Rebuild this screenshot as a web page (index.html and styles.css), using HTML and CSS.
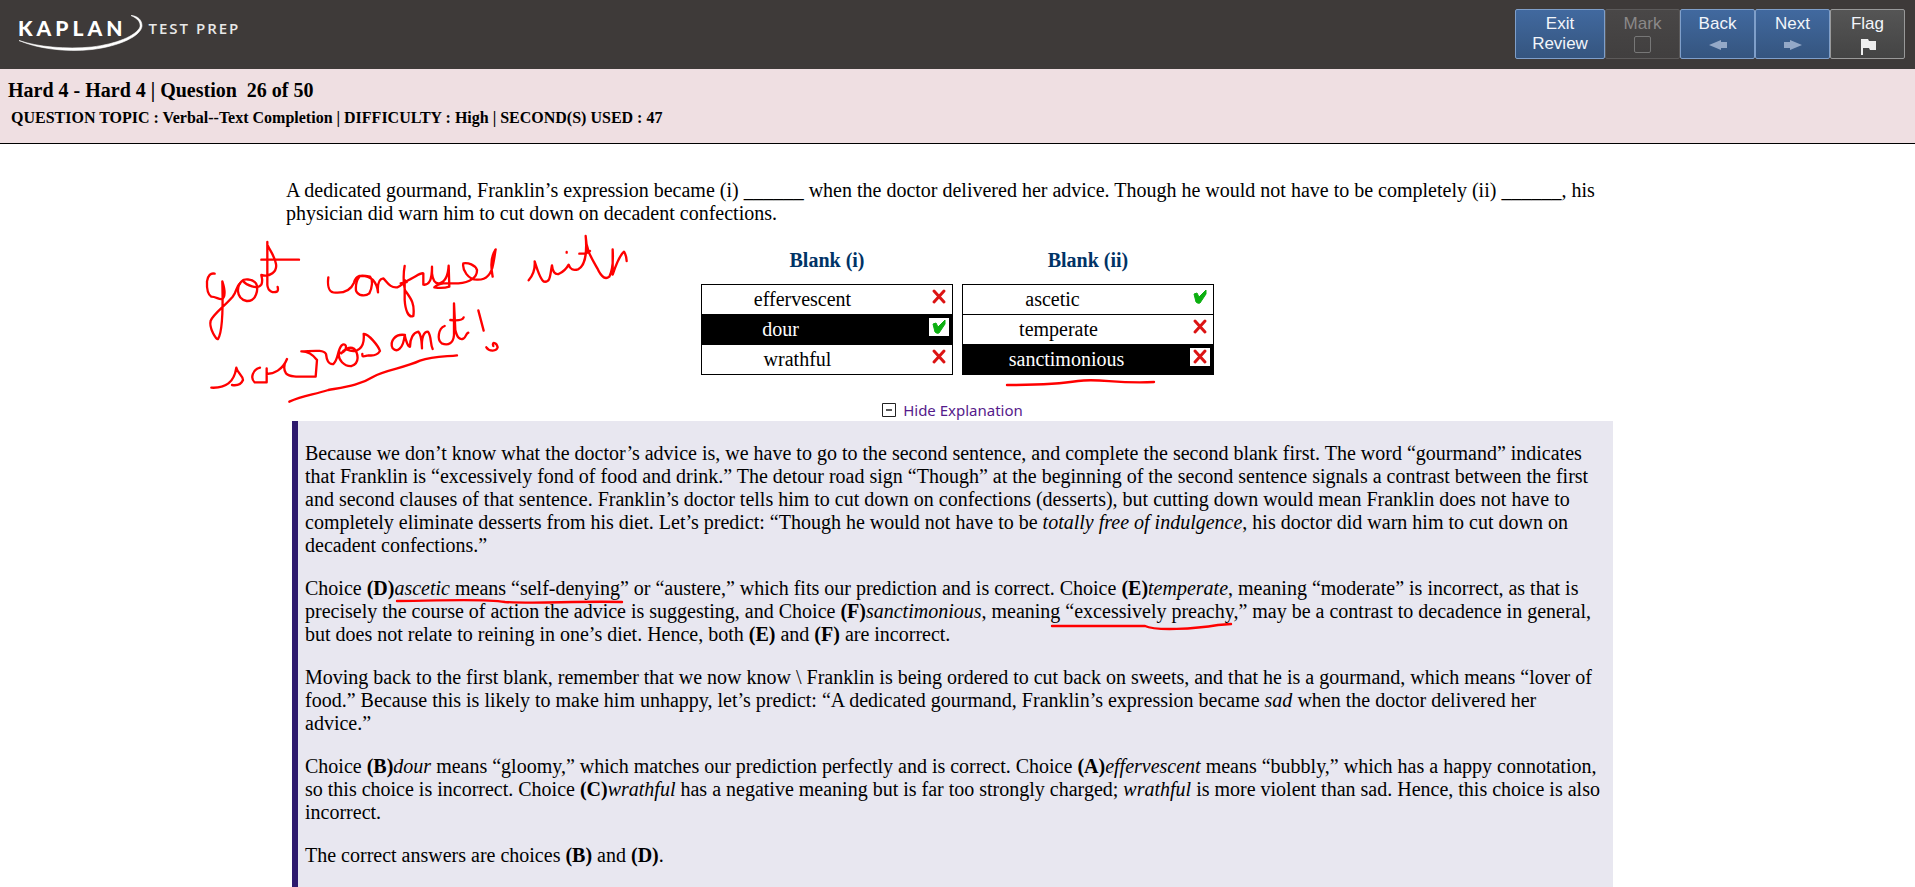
FILE: index.html
```html
<!DOCTYPE html>
<html lang="en">
<head>
<meta charset="utf-8">
<title>Kaplan Test Prep - Review</title>
<link rel="stylesheet" href="styles.css">
</head>
<body>
<header class="topbar">
  <div class="logo">
    <span class="logo-name">KAPLAN</span>
    <span class="logo-sub">TEST PREP</span>
    <svg class="logo-swoosh" width="126" height="42" viewBox="0 0 126 42" aria-hidden="true"><path d="M1 25.500C18 33 46 37.500 74 34.500C102 31 123 21 124 11C124 5 120 1 113 .5C119 3 123 7 122 12C118 21 98 29 74 32C48 34.500 20 32 1 25.500Z" fill="#fff" stroke="#fff" stroke-width=".6"/></svg>
  </div>
  <nav class="tools">
    <button class="tool wide" type="button"><span>Exit</span><span>Review</span></button>
    <button class="tool off" type="button" disabled>Mark<span class="mark-box"></span></button>
    <button class="tool" type="button">Back<svg width="20" height="12" viewBox="0 0 20 12"><path d="M1 6L13 1V3H19V9H13V11Z" fill="#94a9c8"/></svg></button>
    <button class="tool" type="button">Next<svg width="20" height="12" viewBox="0 0 20 12"><path d="M19 6L7 1V3H1V9H7V11Z" fill="#94a9c8"/></svg></button>
    <button class="tool gray" type="button">Flag<svg width="18" height="18" viewBox="0 0 18 18"><path d="M2 1H9L10 3H17V12H11L10 10H4V17H2Z" fill="#eee"/></svg></button>
  </nav>
</header>
<section class="info">
  <h1 class="info-title">Hard 4 - Hard 4 | Question &nbsp;26 of 50</h1>
  <p class="info-meta">QUESTION TOPIC : Verbal--Text Completion | DIFFICULTY : High | SECOND(S) USED : 47</p>
</section>
<main class="content">
  <p class="question">A dedicated gourmand, Franklin’s expression became (i) ______ when the doctor delivered her advice. Though he would not have to be completely (ii) ______, his physician did warn him to cut down on decadent confections.</p>
  <div class="blanks">
    <table class="blank">
      <caption>Blank (i)</caption>
      <tr><td><div class="choice inset-s"><span class="word">effervescent</span><svg class="mark" viewBox="0 0 20 18"><use href="#cross"/></svg></div></td></tr>
      <tr class="picked"><td><div class="choice inset-xl"><span class="word">dour</span><svg class="mark" viewBox="0 0 20 18"><use href="#tick"/></svg></div></td></tr>
      <tr><td><div class="choice inset-m"><span class="word">wrathful</span><svg class="mark" viewBox="0 0 20 18"><use href="#cross"/></svg></div></td></tr>
    </table>
    <table class="blank">
      <caption>Blank (ii)</caption>
      <tr><td><div class="choice inset-l"><span class="word">ascetic</span><svg class="mark" viewBox="0 0 20 18"><use href="#tick"/></svg></div></td></tr>
      <tr><td><div class="choice inset-m"><span class="word">temperate</span><svg class="mark" viewBox="0 0 20 18"><use href="#cross"/></svg></div></td></tr>
      <tr class="picked"><td><div class="choice inset-xs"><span class="word">sanctimonious</span><svg class="mark" viewBox="0 0 20 18"><use href="#cross"/></svg></div></td></tr>
    </table>
  </div>
  <a class="toggle" href="#explanation"><svg width="14" height="14" viewBox="0 0 14 14"><path d="M.5.500H13.500V13.500H.5Z" fill="#fff" stroke="#222"/><path d="M4 7H10" stroke="#222" stroke-width="1.500"/></svg>Hide Explanation</a>
  <article class="explanation" id="explanation">
    <p>Because we don’t know what the doctor’s advice is, we have to go to the second sentence, and complete the second blank first. The word “gourmand” indicates that Franklin is “excessively fond of food and drink.” The detour road sign “Though” at the beginning of the second sentence signals a contrast between the first and second clauses of that sentence. Franklin’s doctor tells him to cut down on confections (desserts), but cutting down would mean Franklin does not have to completely eliminate desserts from his diet. Let’s predict: “Though he would not have to be <i>totally free of indulgence</i>, his doctor did warn him to cut down on decadent confections.”</p>
    <p>Choice <b>(D)</b><i>ascetic</i> means “self-denying” or “austere,” which fits our prediction and is correct. Choice <b>(E)</b><i>temperate</i>, meaning “moderate” is incorrect, as that is precisely the course of action the advice is suggesting, and Choice <b>(F)</b><i>sanctimonious</i>, meaning “excessively preachy,” may be a contrast to decadence in general, but does not relate to reining in one’s diet. Hence, both <b>(E)</b> and <b>(F)</b> are incorrect.</p>
    <p>Moving back to the first blank, remember that we now know \ Franklin is being ordered to cut back on sweets, and that he is a gourmand, which means “lover of food.” Because this is likely to make him unhappy, let’s predict: “A dedicated gourmand, Franklin’s expression became <i>sad</i> when the doctor delivered her advice.”</p>
    <p>Choice <b>(B)</b><i>dour</i> means “gloomy,” which matches our prediction perfectly and is correct. Choice <b>(A)</b><i>effervescent</i> means “bubbly,” which has a happy connotation, so this choice is incorrect. Choice <b>(C)</b><i>wrathful</i> has a negative meaning but is far too strongly charged; <i>wrathful</i> is more violent than sad. Hence, this choice is also incorrect.</p>
    <p>The correct answers are choices <b>(B)</b> and <b>(D)</b>.</p>
  </article>
  <svg class="ink" width="1400" height="500" viewBox="190 220 1400 500" aria-hidden="true">
    <g transform="translate(190 220) scale(.33333)" stroke-width="7">
      <path d="M74 161C62 158 54 166 51 184C50 205 54 224 64 230C78 230 88 240 96 237C104 232 107 215 97 184C98 230 102 330 84 357C80 362 56 325 62 302C72 280 100 262 128 230C142 212 138 200 150 190"/>
      <path d="M160 180C138 195 136 235 170 243C200 245 206 205 198 190C186 174 160 178 158 182C170 196 202 210 214 194C220 180 214 170 214 165C240 172 262 155 258 132C254 108 238 88 234 78M232 66V195C234 215 250 220 262 214C265 210 264 205 263 201M214 119H327"/>
      <path d="M415 172C412 195 416 215 430 217C455 220 480 216 492 188C498 166 510 164 540 170C550 180 546 205 538 220C526 230 505 228 498 212C496 190 500 180 508 170M508 168C545 165 560 185 564 217C562 190 568 176 580 175C592 186 600 205 622 202C636 198 640 185 660 178C680 168 690 158 700 160V194C715 196 726 185 726 140V160C728 180 735 192 748 190C765 186 774 172 776 137L778 200C765 204 745 204 733 202C746 188 770 188 805 190C840 188 862 172 861 150C855 134 835 128 820 130C816 150 835 180 862 179C890 180 905 160 910 130C914 110 915 98 917 88C905 105 900 130 908 170M644 138C638 170 642 210 648 215C662 235 675 250 670 288C655 295 646 270 644 240V180M632 190L650 186"/>
      <path d="M1016 181C1030 165 1036 150 1034 124C1042 150 1052 180 1062 185C1082 188 1080 165 1086 136C1088 155 1094 164 1106 162C1122 155 1130 145 1136 134C1140 148 1150 152 1164 148C1184 138 1192 100 1187 48C1188 90 1205 115 1222 145C1236 176 1248 178 1258 170C1268 150 1270 120 1268 88V164C1276 140 1290 105 1302 95C1308 105 1310 115 1310 123M1168 101H1186L1200 93M1130 96V98"/>
      <path d="M64 503C105 505 132 490 139 443C142 460 158 465 159 480C154 492 145 498 126 495M210 443C188 448 180 475 194 487H230V445V462C250 462 278 450 291 417C282 432 278 445 288 460C300 472 325 470 377 470L381 420C370 405 355 394 334 394C370 393 400 388 408 402C410 420 415 434 430 432C445 420 442 390 455 376C462 370 472 374 466 390C454 405 445 398 448 395C440 420 465 440 485 438C510 430 505 400 492 386C478 378 460 390 454 400M470 388C500 402 525 385 521 342C535 340 565 378 570 393C562 406 550 408 535 406C520 410 516 412 517 402"/>
      <path d="M645 345C615 340 598 365 608 385C620 398 640 388 644 345C648 365 655 382 660 380C660 355 670 338 685 335C695 345 695 365 696 385C694 355 700 335 714 335C725 350 720 370 728 387M764 318C745 325 740 360 755 370C775 378 790 370 792 345V250L796 330C802 355 810 360 820 356C830 350 826 342 835 338M781 300C800 302 818 300 821 292M865 271L881 332M889 382C898 396 920 394 923 382C920 366 904 365 910 378M298 545C340 525 370 525 415 510C470 500 510 495 550 470C590 448 640 445 690 422C730 408 770 410 801 406"/>
    </g>
    <path d="M1007 385C1045 385 1060 384 1078 381C1100 378 1115 384 1154 382"/>
    <path d="M397 601C440 601 480 598 505 602C540 604 570 601 622 602"/>
    <path d="M1052 626H1145C1155 631 1195 629 1218 625L1231 624"/>
  </svg>
</main>
<svg class="defs" width="0" height="0" aria-hidden="true">
  <symbol id="cross" viewBox="0 0 20 18"><path d="M5 3L15 14M15 3L5 14" stroke="#dc1414" stroke-width="3" stroke-linecap="round" fill="none"/></symbol>
  <symbol id="tick" viewBox="0 0 20 18"><path d="M4 6L7 5L9 9L16 2V6L10 15Q8 16 6 14Z" fill="#0caf10" stroke="#0caf10"/></symbol>
</svg>
</body>
</html>
```
FILE: styles.css
```css
* { box-sizing: border-box; }
body {
  margin: 0;
  background: #fff;
  color: #000;
  font: 20px/23px "Liberation Serif", "Times New Roman", serif;
}
.topbar {
  display: flex;
  justify-content: space-between;
  align-items: flex-start;
  background: #3e3a39;
  padding: 9px 10px 10px 18px;
}
.logo {
  position: relative;
  display: flex;
  align-items: center;
  gap: 22px;
  padding-top: 8px;
  color: #fff;
  line-height: 22px;
}
.logo-name { font-family: Lato, sans-serif; font-weight: 900; font-size: 21px; letter-spacing: 4px; }
.logo-sub { font-family: "Open Sans", sans-serif; font-weight: 600; font-size: 15px; letter-spacing: 2px; color: #e8e8e8; }
.logo-swoosh { position: absolute; left: 0; top: 6px; }
.tools { display: flex; }
.tool {
  display: flex;
  flex-direction: column;
  justify-content: flex-start;
  align-items: center;
  width: 75px;
  height: 50px;
  padding: 4px 0 0;
  border: 1px solid #7f9fca;
  border-radius: 2px;
  background: linear-gradient(#41699f, #35557f);
  color: #f2f5fa;
  font: 17px/20px "Liberation Sans", Arial, sans-serif;
}
.tool.wide { width: 90px; }
.tool svg { margin-top: 5px; }
.tool.off { background: linear-gradient(#494747, #413f3f); border-color: #5c5a5a; color: #8b8989; }
.tool.gray { background: linear-gradient(#555, #444); border-color: #999; }
.tool.gray svg { margin-top: 4px; }
.mark-box { width: 17px; height: 17px; margin-top: 2px; border: 1px solid #777; border-radius: 2px; }
.info {
  background: #efdfe2;
  border-bottom: 1px solid #000;
  padding: 10px 8px 15px;
}
.info-title { margin: 0; font-size: 20px; line-height: 23px; }
.info-meta { margin: 5px 0 0 3px; font-size: 16px; line-height: 21px; font-weight: bold; }
.content {
  position: relative;
  padding: 35px 302px 0 286px;
}
.question { margin: 0; }
.blanks { display: flex; justify-content: center; gap: 9px; margin-top: 23px; padding-left: 16px; }
.blank { width: 252px; border-collapse: collapse; }
.blank caption { padding-bottom: 12px; color: #036; font-weight: bold; line-height: 24px; }
.blank td { padding: 0; border: 1px solid #000; }
.choice { display: flex; height: 29px; padding: 3px 3px 0 0; }
.word { flex: 1; line-height: 23px; text-align: center; }
.inset-xs .word { padding-right: 20px; }
.inset-s .word { padding-right: 26px; }
.inset-m .word { padding-right: 36px; }
.inset-l .word { padding-right: 48px; }
.inset-xl .word { padding-right: 70px; }
.mark { width: 20px; height: 18px; background: #fff; }
.picked { background: #000; color: #fff; }
.toggle {
  display: flex;
  justify-content: center;
  align-items: center;
  gap: 7px;
  margin-top: 24px;
  padding: 0 0 1px 6px;
  height: 22px;
  font: 15px/20px "Noto Sans", sans-serif;
  color: #551a8b;
  text-decoration: none;
}
.explanation {
  margin-left: 6px;
  padding: 21px 12px 24px 7px;
  border-left: 6px solid #2e1a6e;
  background: #e8e7f0;
}
.explanation p { margin: 0 0 20px; }
.ink {
  position: absolute;
  left: 190px;
  top: 76px;
  pointer-events: none;
  fill: none;
  stroke: #f00;
  stroke-width: 2.4;
  stroke-linecap: round;
  stroke-linejoin: round;
}
.defs { position: absolute; }
```
